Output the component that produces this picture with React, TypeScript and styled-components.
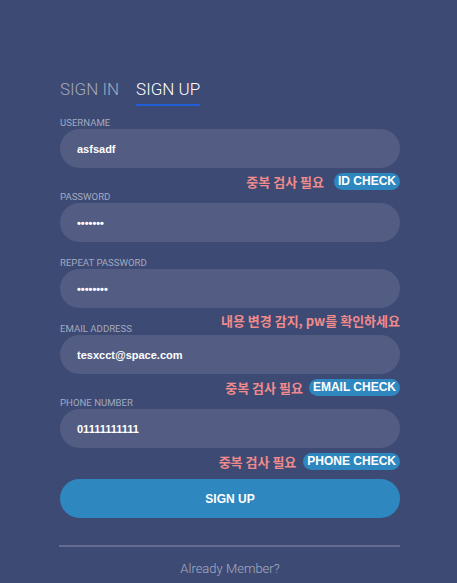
import React from "react";
import styled, { createGlobalStyle } from "styled-components";

const Global = createGlobalStyle`
  html, body { margin: 0; padding: 0; }
  body {
    background: #3d4a74;
    font-family: Roboto, "Noto Sans CJK KR", sans-serif;
    min-height: 583px;
  }
`;

const Page = styled.div`
  width: 457px;
  min-height: 583px;
  background: #3d4a74;
  box-sizing: border-box;
  padding: 79px 57px 0 60px;
`;

const Tabs = styled.div`
  display: flex;
  gap: 17px;
`;

const Tab = styled.div<{ $active?: boolean }>`
  font-family: Roboto, sans-serif;
  font-weight: 300;
  font-size: 17px;
  line-height: 20px;
  padding-bottom: 5px;
  color: ${(p) => (p.$active ? "#ffffff" : "#a3a9ba")};
  border-bottom: 2px solid ${(p) => (p.$active ? "#1f5fd4" : "transparent")};
`;

const Form = styled.div`
  margin-top: 11px;
  display: flex;
  flex-direction: column;
`;

const Label = styled.label`
  display: block;
  font-family: Roboto, sans-serif;
  font-size: 9.6px;
  line-height: 12px;
  color: #a3a9bf;
  text-transform: uppercase;
`;

const Input = styled.input`
  display: block;
  box-sizing: border-box;
  width: 340px;
  height: 39px;
  border: none;
  outline: none;
  border-radius: 20px;
  background: #535d83;
  padding: 0 17px;
  color: #ffffff;
  font-family: "Liberation Sans", Arial, sans-serif;
  font-weight: 700;
  font-size: 11px;
`;

const NoteRow = styled.div<{ $h: number; $pt: number; $gap: number }>`
  height: ${(p) => p.$h}px;
  box-sizing: border-box;
  padding-top: ${(p) => p.$pt}px;
  display: flex;
  justify-content: flex-end;
  align-items: flex-start;
  gap: ${(p) => p.$gap}px;
  overflow: visible;
`;

const Warn = styled.span`
  font-family: "Noto Sans CJK KR", sans-serif;
  font-weight: 700;
  font-size: 13px;
  line-height: 17px;
  color: #f08a8c;
  white-space: nowrap;
`;

const CheckBadge = styled.span`
  display: inline-block;
  height: 17px;
  line-height: 17px;
  padding: 0 4px;
  border-radius: 9px;
  background: #2f87bf;
  color: #ffffff;
  font-family: "Liberation Sans", Arial, sans-serif;
  font-weight: 700;
  font-size: 12px;
  white-space: nowrap;
`;

const Submit = styled.button`
  margin-top: 8px;
  width: 340px;
  height: 39px;
  border: none;
  border-radius: 20px;
  background: #2f87bf;
  color: #ffffff;
  font-family: "Liberation Sans", Arial, sans-serif;
  font-weight: 700;
  font-size: 12px;
  padding: 0;
`;

const Divider = styled.div`
  margin-top: 27px;
  height: 2px;
  width: 341px;
  margin-left: -1px;
  background: #646d91;
`;

const Footer = styled.div`
  margin-top: 14px;
  text-align: center;
  font-family: Roboto, sans-serif;
  font-weight: 300;
  font-size: 13px;
  line-height: 16px;
  color: #a7adc1;
`;

type Check = { warn: string; badge: string; gap: number };

const Field: React.FC<{
  label: string;
  type?: string;
  value: string;
  check?: Check;
}> = ({ label, type = "text", value, check }) => (
  <>
    <Label>{label}</Label>
    <Input type={type} defaultValue={value} readOnly />
    {check ? (
      <NoteRow $h={23} $pt={5} $gap={check.gap}>
        <Warn>{check.warn}</Warn>
        <CheckBadge>{check.badge}</CheckBadge>
      </NoteRow>
    ) : null}
  </>
);

export default function App() {
  return (
    <Page>
      <Global />
      <Tabs>
        <Tab>SIGN IN</Tab>
        <Tab $active>SIGN UP</Tab>
      </Tabs>
      <Form>
        <Field
          label="Username"
          value="asfsadf"
          check={{ warn: "중복 검사 필요", badge: "ID CHECK", gap: 10 }}
        />
        <Field label="Password" type="password" value="asdfasd" />
        <NoteRow $h={15} $pt={0} $gap={0} />
        <Field label="Repeat Password" type="password" value="asdfasdf" />
        <NoteRow $h={15} $pt={4} $gap={0}>
          <Warn>내용 변경 감지, pw를 확인하세요</Warn>
        </NoteRow>
        <Field
          label="Email Address"
          value="tesxcct@space.com"
          check={{ warn: "중복 검사 필요", badge: "EMAIL CHECK", gap: 6 }}
        />
        <Field
          label="Phone Number"
          value="01111111111"
          check={{ warn: "중복 검사 필요", badge: "PHONE CHECK", gap: 7 }}
        />
        <Submit>SIGN UP</Submit>
        <Divider />
        <Footer>Already Member?</Footer>
      </Form>
    </Page>
  );
}
